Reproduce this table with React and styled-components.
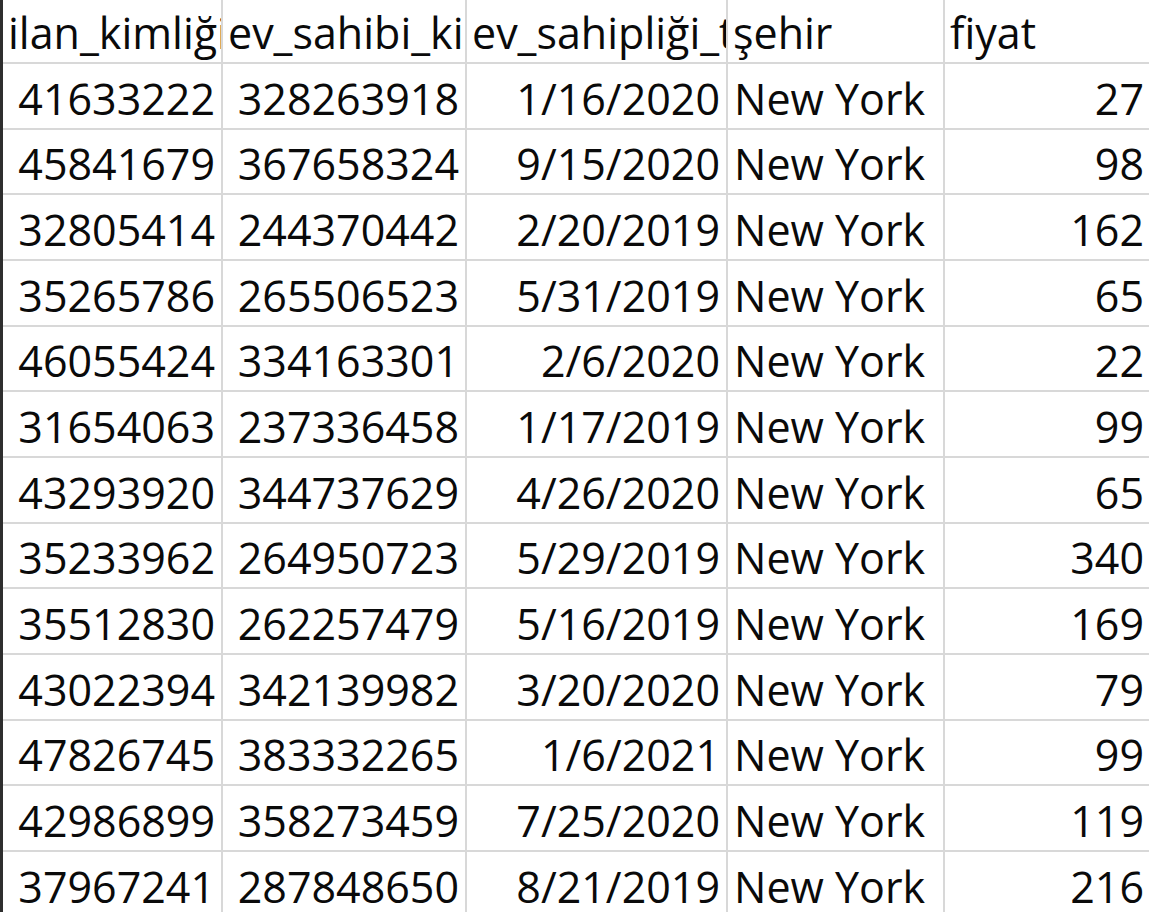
import React from "react";
import styled, { createGlobalStyle } from "styled-components";

const Global = createGlobalStyle`
  html, body { margin: 0; padding: 0; background: #ffffff; }
  body { font-family: "Open Sans", "Liberation Sans", sans-serif; overflow: hidden; }
`;

const Sheet = styled.div`
  display: grid;
  grid-template-columns: 220px 244px 261px 217px 207px;
  border-left: 3px solid #2e2e2e;
  width: max-content;
  background: #fff;
`;

const Cell = styled.div`
  display: flex;
  align-items: flex-end;
  justify-content: ${(p) => (p.$align === "right" ? "flex-end" : "flex-start")};
  height: 60.67px;
  box-sizing: content-box;
  padding: 0 6px 3px 6px;
  border-right: 2px solid #d8d8d8;
  border-bottom: 2px solid #d8d8d8;
  overflow: hidden;
  white-space: nowrap;
  font-family: "Open Sans", "Liberation Sans", sans-serif;
  font-size: 43px;
  line-height: 52px;
  color: #0a0a0a;
`;

const HeadCell = styled(Cell)`
  height: 59px;
  padding-left: 5px;
`;

const headers = ["ilan_kimliği", "ev_sahibi_kimliği", "ev_sahipliği_tarihi", "şehir", "fiyat"];

const rows = [
  ["41633222", "328263918", "1/16/2020", "New York", "27"],
  ["45841679", "367658324", "9/15/2020", "New York", "98"],
  ["32805414", "244370442", "2/20/2019", "New York", "162"],
  ["35265786", "265506523", "5/31/2019", "New York", "65"],
  ["46055424", "334163301", "2/6/2020", "New York", "22"],
  ["31654063", "237336458", "1/17/2019", "New York", "99"],
  ["43293920", "344737629", "4/26/2020", "New York", "65"],
  ["35233962", "264950723", "5/29/2019", "New York", "340"],
  ["35512830", "262257479", "5/16/2019", "New York", "169"],
  ["43022394", "342139982", "3/20/2020", "New York", "79"],
  ["47826745", "383332265", "1/6/2021", "New York", "99"],
  ["42986899", "358273459", "7/25/2020", "New York", "119"],
  ["37967241", "287848650", "8/21/2019", "New York", "216"],
];

const aligns = ["right", "right", "right", "left", "right"];

export default function App() {
  return (
    <>
      <Global />
      <Sheet>
        {headers.map((h) => (
          <HeadCell key={h}>{h}</HeadCell>
        ))}
        {rows.map((r, i) =>
          r.map((v, j) => (
            <Cell key={i + "-" + j} $align={aligns[j]}>
              {v}
            </Cell>
          ))
        )}
      </Sheet>
    </>
  );
}
